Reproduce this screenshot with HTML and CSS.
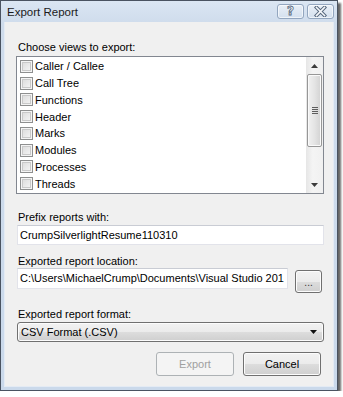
FILE: index.html
```html
<!DOCTYPE html>
<html lang="en">
<head>
    <meta charset="UTF-8">
    <title>Export Report</title>
    <link rel="stylesheet" href="styles.css">
</head>
<body>
    <div class="window">
        <div class="titlebar">
            <span class="title">Export Report</span>
            <div class="caption-buttons">
                <div class="cap-btn"><span class="help-glyph">?</span></div>
                <div class="cap-btn">
                    <svg width="13" height="11" viewBox="0 0 13 11">
                        <path d="M2.5 1.5 L10.5 9.5 M10.5 1.5 L2.5 9.5" stroke="#56677d" stroke-width="3.6" stroke-linecap="square"/>
                        <path d="M2.5 1.5 L10.5 9.5 M10.5 1.5 L2.5 9.5" stroke="#f6f8fb" stroke-width="1.6" stroke-linecap="square"/>
                    </svg>
                </div>
            </div>
        </div>

        <div class="client">
            <div class="label label-first">Choose views to export:</div>
            <div class="listbox">
                <div class="items">
                    <div class="item"><span class="check"></span>Caller / Callee</div>
                    <div class="item"><span class="check"></span>Call Tree</div>
                    <div class="item"><span class="check"></span>Functions</div>
                    <div class="item"><span class="check"></span>Header</div>
                    <div class="item"><span class="check"></span>Marks</div>
                    <div class="item"><span class="check"></span>Modules</div>
                    <div class="item"><span class="check"></span>Processes</div>
                    <div class="item"><span class="check"></span>Threads</div>
                </div>
                <div class="scrollbar">
                    <div class="sb-btn">
                        <svg width="7" height="4" viewBox="0 0 7 4"><polygon points="3.5,0 7,4 0,4" fill="#3c3c3c"/></svg>
                    </div>
                    <div class="sb-thumb"><span class="grip"></span></div>
                    <div class="sb-track"></div>
                    <div class="sb-btn">
                        <svg width="7" height="4" viewBox="0 0 7 4"><polygon points="0,0 7,0 3.5,4" fill="#3c3c3c"/></svg>
                    </div>
                </div>
            </div>

            <div class="label label-prefix">Prefix reports with:</div>
            <div class="textbox">CrumpSilverlightResume110310</div>

            <div class="label label-location">Exported report location:</div>
            <div class="location-row">
                <div class="textbox textbox-path">C:\Users\MichaelCrump\Documents\Visual Studio 201</div>
                <div class="button browse">...</div>
            </div>

            <div class="label label-format">Exported report format:</div>
            <div class="combo">
                <span>CSV Format (.CSV)</span>
                <svg width="7" height="4" viewBox="0 0 7 4"><polygon points="0,0 7,0 3.5,4" fill="#111"/></svg>
            </div>

            <div class="dialog-buttons">
                <div class="button disabled">Export</div>
                <div class="button">Cancel</div>
            </div>
        </div>
    </div>
</body>
</html>
```

FILE: styles.css
```css
body {
    margin: 0;
    background-color: #fff;
    font-family: "Segoe UI", "Liberation Sans", Arial, sans-serif;
    font-size: 11px;
    color: #000;
}
.window {
    box-sizing: border-box;
    width: 338px;
    height: 391px;
    border: 1px solid #4a5361;
    box-shadow: 3px 3px 2px rgba(0, 0, 0, 0.6);
    background: linear-gradient(#dbe6f3, #cfdcec 22px, #cad9eb);
    padding: 0 3px 3px 3px;
    display: flex;
    flex-direction: column;
}
.titlebar {
    height: 21px;
    display: flex;
    justify-content: space-between;
    align-items: flex-start;
    flex-shrink: 0;
}
.title {
    padding-left: 3px;
    font-size: 11.5px;
    line-height: 22px;
    color: #1b1b1b;
}
.caption-buttons {
    display: flex;
    gap: 3px;
    margin-top: 3px;
}
.cap-btn {
    box-sizing: border-box;
    width: 27px;
    height: 15px;
    border: 1px solid #93a6bf;
    border-radius: 3px;
    background: linear-gradient(#e9eff7, #d4e0ee);
    display: flex;
    align-items: center;
    justify-content: center;
    box-shadow: inset 0 0 0 1px rgba(255, 255, 255, 0.6);
}
.help-glyph {
    font-family: "DejaVu Sans", sans-serif;
    font-weight: bold;
    font-size: 12px;
    line-height: 13px;
    color: #f6f8fb;
    -webkit-text-stroke: 0.8px #56677d;
}
.client {
    flex: 1;
    background-color: #f0f0f0;
    padding: 18px 11px 0 12px;
    border: 1px solid #e4ebf4;
    border-top: none;
}
.label {
    line-height: 14px;
    padding-left: 1px;
}
.label-first {
    margin-bottom: 2px;
}
.label-prefix {
    margin-top: 16px;
    margin-bottom: 1px;
}
.label-location {
    margin-top: 9px;
}
.label-format {
    margin-top: 14px;
    margin-bottom: 1px;
}
.listbox {
    box-sizing: border-box;
    width: 308px;
    height: 138px;
    margin-left: -1px;
    border: 1px solid #828790;
    background-color: #fff;
    display: flex;
}
.items {
    flex: 1;
    padding-top: 1px;
}
.item {
    height: 16.75px;
    display: flex;
    align-items: center;
    padding-left: 3px;
    white-space: nowrap;
}
.check {
    box-sizing: border-box;
    width: 13px;
    height: 13px;
    margin-right: 2px;
    border: 1px solid #8e8f8f;
    background: linear-gradient(135deg, #d8d8d8, #f8f8f8);
    box-shadow: inset 0 0 0 1px #f4f4f4, inset 0 0 0 2px #c9c9c9;
}
.scrollbar {
    width: 17px;
    display: flex;
    flex-direction: column;
    background: linear-gradient(to right, #e6e6e6, #f4f4f4 40%, #f0f0f0);
}
.sb-btn {
    height: 17px;
    display: flex;
    align-items: center;
    justify-content: center;
}
.sb-thumb {
    box-sizing: border-box;
    height: 73px;
    margin: 0 1px;
    border: 1px solid #979797;
    border-radius: 2px;
    background: linear-gradient(to right, #f1f1f1, #e4e4e4 50%, #d2d2d2);
    box-shadow: inset 0 0 0 1px #fafafa;
    display: flex;
    align-items: center;
    justify-content: center;
}
.grip {
    width: 6px;
    height: 7px;
    background: repeating-linear-gradient(#5d5d5d 0, #5d5d5d 1px, transparent 1px, transparent 2px);
}
.sb-track {
    flex: 1;
}
.textbox {
    box-sizing: border-box;
    width: 307px;
    height: 20px;
    border: 1px solid #e2e3ea;
    border-top-color: #c9ccd4;
    background-color: #fff;
    padding-left: 2px;
    line-height: 18px;
    white-space: nowrap;
    overflow: hidden;
}
.location-row {
    display: flex;
    gap: 7px;
    align-items: flex-start;
}
.textbox-path {
    width: 272px;
    height: 21px;
    line-height: 19px;
}
.button {
    box-sizing: border-box;
    border: 1px solid #707070;
    border-radius: 3px;
    background: linear-gradient(#f2f2f2, #ebebeb 50%, #dddddd 50%, #cfcfcf);
    box-shadow: inset 0 0 0 1px #fcfcfc;
    display: flex;
    align-items: center;
    justify-content: center;
}
.browse {
    width: 27px;
    height: 23px;
    margin-top: 2px;
    font-size: 10px;
    line-height: 10px;
    padding-top: 3px;
    color: #333;
}
.combo {
    box-sizing: border-box;
    height: 20px;
    width: 307px;
    border: 1px solid #707070;
    border-radius: 3px;
    background: linear-gradient(#f2f2f2, #ebebeb 50%, #dddddd 50%, #cfcfcf);
    box-shadow: inset 0 0 0 1px #fcfcfc;
    display: flex;
    align-items: center;
    justify-content: space-between;
    padding: 0 6px 0 3px;
}
.dialog-buttons {
    display: flex;
    justify-content: flex-end;
    gap: 9px;
    margin-top: 10px;
    padding-right: 1px;
}
.dialog-buttons .button {
    width: 78px;
    height: 24px;
}
.button.disabled {
    border-color: #adb2b5;
    background: #f4f4f4;
    box-shadow: none;
    color: #a0a0a0;
}
```
